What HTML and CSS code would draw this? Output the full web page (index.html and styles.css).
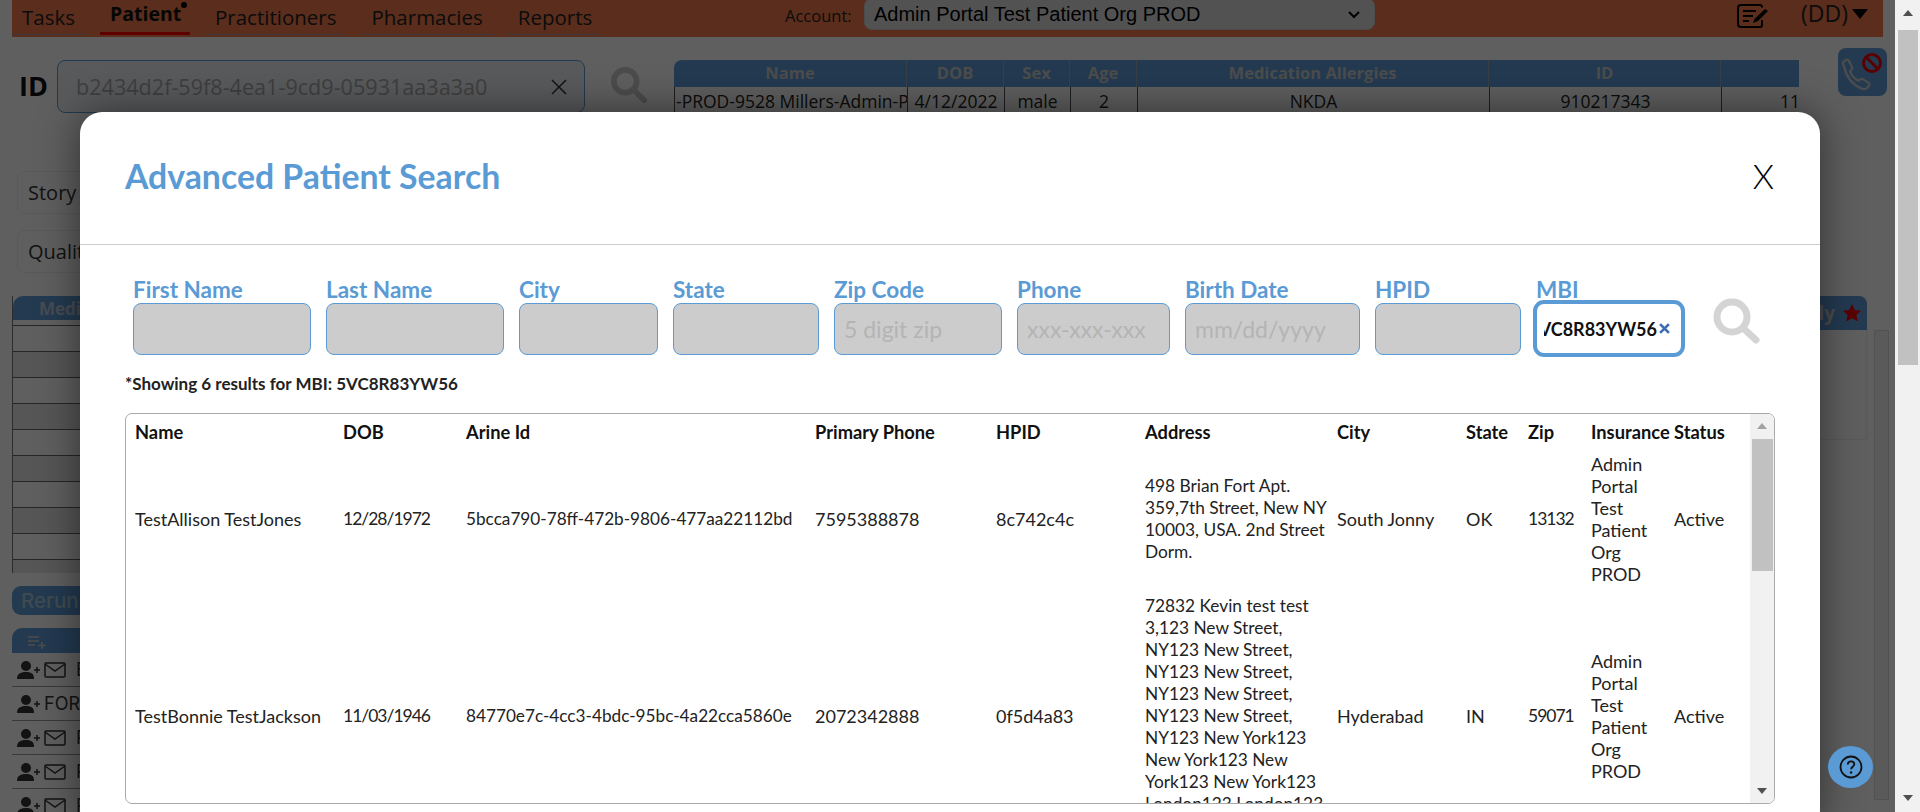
FILE: index.html
```html
<!DOCTYPE html>
<html lang="en">
<head>
<meta charset="utf-8">
<title>Advanced Patient Search</title>
<link rel="stylesheet" href="styles.css">
</head>
<body>
<div class="viewport">
  <main class="page">
    <header class="topbar">
      <nav class="tabs">
        <a class="tab tab-tasks">Tasks</a>
        <a class="tab tab-active">Patient<i class="dot"></i></a>
        <a class="tab">Practitioners</a>
        <a class="tab">Pharmacies</a>
        <a class="tab">Reports</a>
      </nav>
      <span class="account-label">Account:</span>
      <div class="account-select">
        <span>Admin Portal Test Patient Org PROD</span>
        <svg class="chev" viewBox="0 0 14 10" width="14" height="10"><path d="M2 2l5 5 5-5" fill="none" stroke="#000" stroke-width="2"/></svg>
      </div>
      <svg class="note-icon" viewBox="0 0 32 24" width="32" height="24"><path d="M25 3.500V3a2 2 0 0 0-2-2H4a3 3 0 0 0-3 3v16a3 3 0 0 0 3 3h19a2 2 0 0 0 2-2v-5" fill="none" stroke="#000" stroke-width="2"/><path d="M6 7h13M6 12h10M6 17h6" stroke="#000" stroke-width="2"/><path d="M16 19l1.500-4L28 5l3 2-10 10z" fill="#000"/></svg>
      <span class="user">(DD)</span><i class="user-caret"></i>
    </header>

    <section class="top-row">
      <strong class="id-label">ID</strong>
      <div class="id-input"><span>b2434d2f-59f8-4ea1-9cd9-05931aa3a3a0</span><svg viewBox="0 0 16 16" width="16" height="16"><path d="M1 1l14 14M15 1L1 15" stroke="#333" stroke-width="1.500"/></svg></div>
      <svg class="id-search" viewBox="0 0 40 40" width="38" height="38"><circle cx="16" cy="16" r="12" fill="none" stroke="#ccc" stroke-width="6"/><path d="M25 25l11 11" stroke="#ccc" stroke-width="6" stroke-linecap="round"/></svg>
      <div class="patient-table">
        <div class="pt-row pt-head"><span>Name</span><span>DOB</span><span>Sex</span><span>Age</span><span>Medication Allergies</span><span>ID</span><span></span></div>
        <div class="pt-row pt-body"><span class="clip">-PROD-9528 Millers-Admin-Portal</span><span>4/12/2022</span><span>male</span><span>2</span><span>NKDA</span><span>910217343</span><span class="right">11</span></div>
      </div>
      <div class="phone-btn">
        <svg viewBox="0 0 49 48" width="49" height="48"><path d="M6 18c-1.500-1.500-1.500-3.500 0-4.500l2-1.500c1.500-.8 2.500-.3 3 1l3 6c.5 1 .3 2-.5 2.800l-1.500 1.500c1.500 4 4 7 8.500 9.500l2-1.500c1-.7 2-.7 3 0l5 3.500c1.300 1 1.300 2.200.3 3.200l-1.800 2c-1.500 1.300-3.500 1.500-5.500.5C13 36 8 28 6 18z" fill="none" stroke="#ccc" stroke-width="2.200"/><circle cx="34" cy="15" r="8.500" fill="none" stroke="#e00" stroke-width="3"/><path d="M28 9l12 12" stroke="#e00" stroke-width="3"/></svg>
      </div>
    </section>

    <section class="lower">
      <div class="left-col">
        <div class="chip">Story Points</div>
        <div class="chip">Quality Gaps</div>
        <div class="meds">
          <div class="meds-head">Medications</div>
          <div class="meds-row"></div><div class="meds-row alt"></div><div class="meds-row"></div><div class="meds-row alt"></div><div class="meds-row"></div><div class="meds-row alt"></div><div class="meds-row"></div><div class="meds-row alt"></div><div class="meds-row"></div><div class="meds-row alt"></div>
        </div>
        <div class="rerun">Rerun</div>
        <div class="list">
          <div class="list-head"><svg viewBox="0 0 20 14" width="20" height="14"><path d="M1 2h11M1 6h11M1 10h7M15 7v7M11.500 10.500h7" stroke="#ccc" stroke-width="1.500"/></svg></div>
          <div class="list-row"><svg class="user-plus" viewBox="0 0 26 20" width="26" height="20"><circle cx="9" cy="6" r="5" fill="#333"/><path d="M0 19c0-5 3-7 9-7s8 2 8 7z" fill="#333"/><path d="M20 7v6M17 10h6" stroke="#333" stroke-width="1.500"/></svg><svg class="env" viewBox="0 0 22 16" width="22" height="16"><rect x="1" y="1" width="20" height="14" rx="1" fill="none" stroke="#333" stroke-width="1.500"/><path d="M1 2l10 7 10-7" fill="none" stroke="#333" stroke-width="1.500"/></svg><span>EDWARD</span></div>
          <div class="list-row"><svg class="user-plus" viewBox="0 0 26 20" width="26" height="20"><circle cx="9" cy="6" r="5" fill="#333"/><path d="M0 19c0-5 3-7 9-7s8 2 8 7z" fill="#333"/><path d="M20 7v6M17 10h6" stroke="#333" stroke-width="1.500"/></svg><span class="tight">FORREST</span></div>
          <div class="list-row"><svg class="user-plus" viewBox="0 0 26 20" width="26" height="20"><circle cx="9" cy="6" r="5" fill="#333"/><path d="M0 19c0-5 3-7 9-7s8 2 8 7z" fill="#333"/><path d="M20 7v6M17 10h6" stroke="#333" stroke-width="1.500"/></svg><svg class="env" viewBox="0 0 22 16" width="22" height="16"><rect x="1" y="1" width="20" height="14" rx="1" fill="none" stroke="#333" stroke-width="1.500"/><path d="M1 2l10 7 10-7" fill="none" stroke="#333" stroke-width="1.500"/></svg><span>PETER</span></div>
          <div class="list-row"><svg class="user-plus" viewBox="0 0 26 20" width="26" height="20"><circle cx="9" cy="6" r="5" fill="#333"/><path d="M0 19c0-5 3-7 9-7s8 2 8 7z" fill="#333"/><path d="M20 7v6M17 10h6" stroke="#333" stroke-width="1.500"/></svg><svg class="env" viewBox="0 0 22 16" width="22" height="16"><rect x="1" y="1" width="20" height="14" rx="1" fill="none" stroke="#333" stroke-width="1.500"/><path d="M1 2l10 7 10-7" fill="none" stroke="#333" stroke-width="1.500"/></svg><span>PAUL</span></div>
          <div class="list-row"><svg class="user-plus" viewBox="0 0 26 20" width="26" height="20"><circle cx="9" cy="6" r="5" fill="#333"/><path d="M0 19c0-5 3-7 9-7s8 2 8 7z" fill="#333"/><path d="M20 7v6M17 10h6" stroke="#333" stroke-width="1.500"/></svg><svg class="env" viewBox="0 0 22 16" width="22" height="16"><rect x="1" y="1" width="20" height="14" rx="1" fill="none" stroke="#333" stroke-width="1.500"/><path d="M1 2l10 7 10-7" fill="none" stroke="#333" stroke-width="1.500"/></svg><span>PHIL</span></div>
        </div>
      </div>
      <div class="side">
        <div class="side-tab"><span>Family</span><svg viewBox="0 0 20 20" width="20" height="20"><path d="M10 1l2.800 6 6.400.7-4.800 4.300 1.400 6.500L10 15.200 4.200 18.500 5.600 12 .8 7.700 7.200 7z" fill="#e00"/></svg></div>
        <div class="side-panel"><div class="side-box"></div><div class="side-track"></div></div>
      </div>
    </section>

    <div class="overlay"></div>

    <div class="modal" role="dialog">
      <div class="modal-head">
        <h1>Advanced Patient Search</h1>
        <span class="close">X</span>
      </div>
      <div class="modal-body">
        <form class="filters">
          <label class="field"><span>First Name</span><input disabled></label>
          <label class="field"><span>Last Name</span><input disabled></label>
          <label class="field"><span>City</span><input disabled></label>
          <label class="field"><span>State</span><input disabled></label>
          <label class="field"><span>Zip Code</span><input disabled placeholder="5 digit zip"></label>
          <label class="field"><span>Phone</span><input disabled placeholder="xxx-xxx-xxx"></label>
          <label class="field"><span>Birth Date</span><input disabled placeholder="mm/dd/yyyy"></label>
          <label class="field"><span>HPID</span><input disabled></label>
          <div class="field"><span>MBI</span>
            <div class="mbi"><div class="mbi-text"><b>5VC8R83YW56</b></div><svg viewBox="0 0 10 10" width="11" height="11"><path d="M1 1l8 8M9 1L1 9" stroke="#3d6db0" stroke-width="2.400"/></svg></div>
          </div>
          <svg class="go" viewBox="0 0 47 46" width="47" height="46"><circle cx="19" cy="19" r="15" fill="none" stroke="#d4d4d4" stroke-width="7"/><path d="M30 30l13 12" stroke="#d4d4d4" stroke-width="7" stroke-linecap="round"/></svg>
        </form>
        <p class="note">*Showing 6 results for MBI: 5VC8R83YW56</p>
        <div class="results">
          <div class="results-scroll">
            <table>
              <colgroup>
                <col class="c-name"><col class="c-dob"><col class="c-id"><col class="c-phone"><col class="c-hpid"><col class="c-addr"><col class="c-city"><col class="c-state"><col class="c-zip"><col class="c-ins"><col class="c-status">
              </colgroup>
              <thead>
                <tr><th>Name</th><th>DOB</th><th>Arine Id</th><th>Primary Phone</th><th>HPID</th><th>Address</th><th>City</th><th>State</th><th>Zip</th><th>Insurance</th><th>Status</th></tr>
              </thead>
              <tbody>
                <tr>
                  <td>TestAllison TestJones</td><td class="num">12/28/1972</td><td class="hash">5bcca790-78ff-472b-9806-477aa22112bd</td><td>7595388878</td><td>8c742c4c</td>
                  <td class="addr">498 Brian Fort Apt.<br>359,7th Street, New NY<br>10003, USA. 2nd Street<br>Dorm.</td>
                  <td>South Jonny</td><td>OK</td><td class="num">13132</td><td>Admin<br>Portal<br>Test<br>Patient<br>Org<br>PROD</td><td>Active</td>
                </tr>
                <tr>
                  <td>TestBonnie TestJackson</td><td class="num">11/03/1946</td><td class="hash">84770e7c-4cc3-4bdc-95bc-4a22cca5860e</td><td>2072342888</td><td>0f5d4a83</td>
                  <td class="addr">72832 Kevin test test<br>3,123 New Street,<br>NY123 New Street,<br>NY123 New Street,<br>NY123 New Street,<br>NY123 New Street,<br>NY123 New York123<br>New York123 New<br>York123 New York123<br>London123 London123<br>London123</td>
                  <td>Hyderabad</td><td>IN</td><td class="num">59071</td><td>Admin<br>Portal<br>Test<br>Patient<br>Org<br>PROD</td><td>Active</td>
                </tr>
              </tbody>
            </table>
          </div>
          <div class="inner-bar"><i class="up"></i><div class="inner-thumb"></div><i class="down"></i></div>
        </div>
      </div>
    </div>

    <button class="help" type="button"><svg viewBox="0 0 24 24" width="24" height="24"><circle cx="12" cy="12" r="10.500" fill="none" stroke="#111" stroke-width="1.800"/><path d="M8.800 9.500c0-2 1.500-3.200 3.300-3.200s3.200 1.200 3.200 2.900c0 2.400-3.200 2.600-3.200 5" fill="none" stroke="#111" stroke-width="1.800"/><circle cx="12.100" cy="17.500" r="1.200" fill="#111"/></svg></button>
  </main>

  <aside class="page-bar"><i class="up"></i><div class="page-thumb"></div><i class="down"></i></aside>
</div>
</body>
</html>
```

FILE: styles.css
```css
* { box-sizing: border-box; }
html, body { margin: 0; height: 100%; overflow: hidden; }
body { font-family: "Open Sans", "Liberation Sans", sans-serif; color: #111; background: #fff; }

.viewport { display: flex; width: 1920px; height: 812px; }
.page { position: relative; flex: 0 0 1895px; height: 812px; overflow: hidden; background: #fff; }

/* top bar */
.topbar { display: flex; align-items: flex-start; height: 37px; margin: 0 12px; background: #f27a4c; }
.tabs { display: flex; gap: 15px; width: 590px; margin-right: 183px; }
.tab { position: relative; display: block; height: 35px; padding: 3px 10px 0; font-size: 20.500px; line-height: 28px; color: #222; border-bottom: 1px solid #999; white-space: nowrap; }
.tab-tasks { width: 73px; }
.tab-active { width: 90px; height: 35px; padding-top: 0; font-size: 19.500px; font-weight: 700; color: #111; border-bottom: 3px solid #ff0000; }
.dot { position: absolute; right: 3px; top: 2px; width: 6px; height: 6px; border-radius: 50%; background: #000; }
.account-label { width: 79px; margin-top: 4px; font-size: 16.500px; line-height: 24px; color: #222; }
.account-select { display: flex; align-items: center; justify-content: space-between; width: 511px; height: 32px; margin-top: -2px; padding: 0 13px 0 9px; border: 1px solid #ccc; border-radius: 8px; background: #dcdcdc; font-family: "Liberation Sans", sans-serif; font-size: 20px; color: #000; }
.chev { margin-top: 2px; }
.note-icon { margin: 4px 32px 0 362px; }
.user { margin-top: -3px; font-size: 23px; line-height: 32px; color: #222; }
.user-caret { width: 0; height: 0; margin: 9px 0 0 4px; border-left: 8px solid transparent; border-right: 8px solid transparent; border-top: 10px solid #000; }

/* patient strip */
.top-row { position: relative; display: flex; align-items: flex-start; height: 78px; padding: 23px 0 0 19px; }
.id-label { width: 38px; margin-top: 6px; font-size: 27px; line-height: 40px; }
.id-input { display: flex; align-items: center; justify-content: space-between; width: 528px; height: 53px; padding: 0 17px 0 18px; border: 1px solid #5b9bd5; border-radius: 8px; background: #eef2f6; font-size: 21.600px; color: #aaa; }
.id-search { margin: 6px 26px 0 25px; }
.patient-table { width: 1125px; font-size: 16.500px; }
.pt-row { display: grid; grid-template-columns: 233px 97px 66px 67px 352px 232px 78px; }
.pt-row span { display: block; text-align: center; border-right: 1px solid #555; }
.pt-head { height: 27px; border-radius: 8px 0 0 0; background: #5f9dd9; color: #ccc; font-weight: 700; line-height: 26px; overflow: hidden; }
.pt-head span { border-right-color: #9ab; }
.pt-head span:last-child { border: 0; }
.pt-body { height: 30px; font-size: 17.500px; line-height: 28px; border-left: 1px solid #555; color: #222; }
.pt-body span:last-child { border: 0; }
.clip { overflow: hidden; white-space: nowrap; text-align: left !important; padding-left: 1px; }
.right { text-align: right !important; }
.phone-btn { position: absolute; left: 1838px; top: 11px; width: 49px; height: 48px; border-radius: 8px; background: #5f9dd9; }
.phone-btn svg { display: block; }

/* lower area */
.lower { display: flex; justify-content: space-between; }
.left-col { width: 420px; padding-left: 12px; }
.chip { width: 300px; height: 43px; margin: 56px 0 16px 5px; padding: 0 0 0 10px; border: 1px solid #eee; border-radius: 8px; font-size: 20px; line-height: 41px; color: #333; }
.chip + .chip { margin-top: 0; margin-bottom: 0; }
.meds { width: 400px; height: 277px; margin-top: 23px; overflow: hidden; border-left: 1px solid #777; }
.meds-head { height: 25px; margin-bottom: 4px; padding-left: 26px; border-radius: 10px 0 0 0; background: #5f9dd9; color: #bcd; font-weight: 700; font-size: 17px; line-height: 25px; border-bottom: 1px solid #fff; }
.meds-row { height: 26px; border-top: 1px solid #666; background: #fff; }
.meds-row.alt { background: #e6e6e6; }
.rerun { width: 300px; height: 29px; margin-top: 13px; padding-left: 9px; border-radius: 9px; background: #5f9dd9; color: #a8c8d8; font-family: Inter, sans-serif; font-size: 20.500px; font-weight: 500; line-height: 29px; }
.list { width: 400px; margin-top: 13px; }
.list-head { height: 25px; padding: 7px 0 0 15px; border-radius: 10px 0 0 0; background: #5f9dd9; }
.list-head svg { display: block; }
.list-row { display: flex; align-items: center; height: 34px; padding-left: 5px; border-bottom: 1px solid #999; font-family: Inter, sans-serif; font-size: 18px; color: #333; }
.user-plus { flex: none; margin-right: 1px; }
.env { flex: none; margin-right: 10px; }
.side { width: 122px; margin-right: 6px; margin-top: 181px; }
.side-tab { display: flex; align-items: center; justify-content: flex-end; gap: 7px; width: 100px; height: 34px; padding-right: 5px; border-radius: 0 8px 0 0; background: #5f9dd9; color: #ccc; font-size: 19px; font-weight: 700; white-space: nowrap; }
.side-tab svg { flex: none; }
.side-panel { display: flex; height: 470px; }
.side-box { width: 100px; height: 110px; border-right: 1px solid #eee; border-bottom: 1px solid #eee; }
.side-track { width: 15px; margin-left: 7px; border: 1px solid #ddd; background: #f0f0f0; }

.overlay { position: absolute; inset: 0; background: rgba(0, 0, 0, .627); }

/* modal */
.modal { position: absolute; left: 80px; top: 112px; width: 1740px; height: 720px; border-radius: 22px; background: #fff; box-shadow: 0 0 40px rgba(0, 0, 0, .5); color: #111; font-family: Lato, "Liberation Sans", sans-serif; }
.modal-head { display: flex; align-items: center; justify-content: space-between; height: 133px; padding: 0 45px 5px; border-bottom: 1px solid #ccc; }
.modal-head h1 { margin: 0; font-size: 33.800px; font-weight: 700; color: #5b9bd5; }
.close { font-size: 34px; font-weight: 300; line-height: 1; margin-right: 1px; color: #000; }
.modal-body { padding: 33px 45px 0; }
.filters { display: grid; grid-template-columns: 178px 178px 139px 146px 168px 153px 175px 146px 146px 47px; column-gap: 15px; align-items: start; margin: 0 0 0 8px; height: 76px; }
.field { display: block; }
.field > span { display: block; height: 25px; font-size: 22.500px; font-weight: 700; line-height: 24px; color: #5b9bd5; white-space: nowrap; }
.field input { display: block; width: 100%; height: 52px; padding: 0 9px; border: 1px solid #5b9bd5; border-radius: 8px; background: #ccc; font: 400 23px Lato, sans-serif; }
.field input::placeholder { color: #b4b4b4; opacity: 1; }
.mbi { display: flex; align-items: center; height: 51px; padding-left: 8px; padding-right: 12px; border-radius: 8px; outline: 4px solid #5b9bd5; outline-offset: -1px; background: #fff; }
.mbi-text { display: flex; justify-content: flex-end; flex: 1; min-width: 0; overflow: hidden; font-size: 18px; margin-right: 2px; white-space: nowrap; }
.mbi-text b { flex: none; }
.go { margin-top: 20px; margin-left: 16px; }
.note { height: 20px; margin: 20px 0 0; font-size: 17px; font-weight: 700; line-height: 20px; color: #222; }
.results { display: flex; height: 391px; margin-top: 19px; border: 1px solid #aaa; border-radius: 7px; overflow: hidden; }
.results-scroll { flex: 1; min-width: 0; overflow: hidden; }
table { width: 1623px; table-layout: fixed; border-collapse: collapse; font-size: 18px; line-height: 22px; color: #222; }
th { height: 34px; padding: 2px 0 0 9px; text-align: left; font-size: 18.300px; font-weight: 700; white-space: nowrap; color: #111; }
td { padding: 5px 0 5px 9px; vertical-align: middle; white-space: nowrap; }
td.hash { font-size: 17.200px; }
td.num { font-size: 17.500px; letter-spacing: -1px; }
td.addr { font-size: 17.300px; }
.c-name { width: 208px; } .c-dob { width: 123px; } .c-id { width: 349px; } .c-phone { width: 181px; }
.c-hpid { width: 149px; } .c-addr { width: 192px; } .c-city { width: 129px; } .c-state { width: 62px; }
.c-zip { width: 63px; } .c-ins { width: 83px; } .c-status { width: 84px; }
.inner-bar { display: flex; flex-direction: column; align-items: center; flex: 0 0 24px; background: #f1f1f1; }
.inner-thumb { width: 21px; height: 132px; margin-top: 10px; background: #c1c1c1; }
.inner-bar .up { margin-top: 9px; }
.inner-bar .down { margin-top: auto; margin-bottom: 9px; }
.up { width: 0; height: 0; border-left: 5px solid transparent; border-right: 5px solid transparent; border-bottom: 6px solid #a3a3a3; }
.down { width: 0; height: 0; border-left: 5px solid transparent; border-right: 5px solid transparent; border-top: 6px solid #505050; }

/* floating help */
.help { position: absolute; left: 1828px; top: 746px; width: 45px; height: 42px; padding: 0; border: 0; border-radius: 50%; background: #5b9bd5; display: flex; align-items: center; justify-content: center; }

/* page scrollbar */
.page-bar { display: flex; flex-direction: column; align-items: center; flex: 0 0 25px; height: 812px; background: #f1f1f1; }
.page-bar .up { margin-top: 10px; border-bottom-color: #505050; }
.page-thumb { width: 20px; height: 335px; margin-top: 14px; background: #c1c1c1; }
.page-bar .down { margin-top: auto; margin-bottom: 11px; }
```
